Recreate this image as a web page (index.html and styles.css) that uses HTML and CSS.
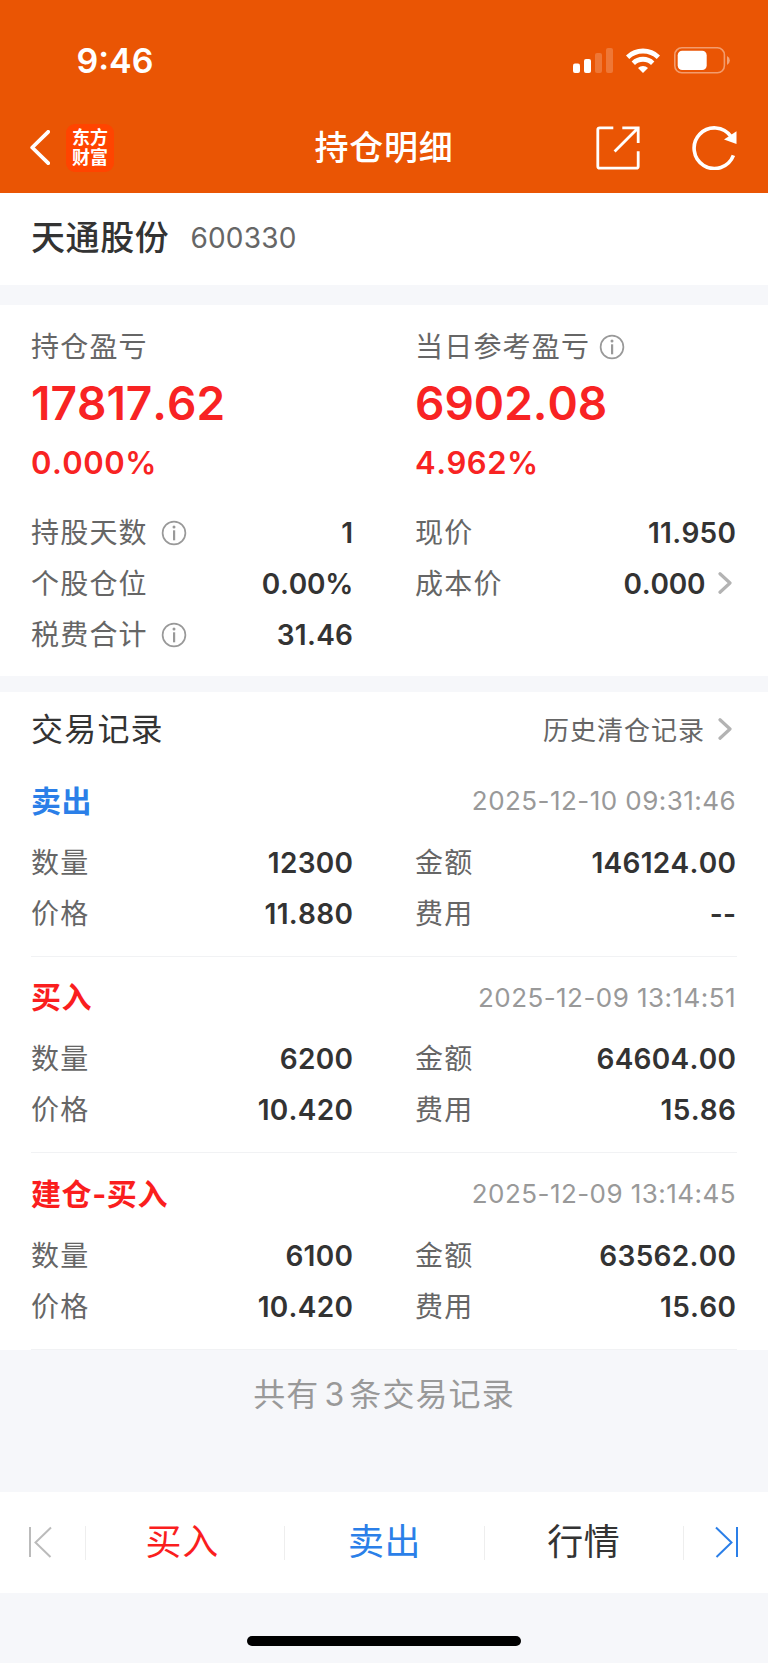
FILE: index.html
```
<!DOCTYPE html>
<html lang="zh-CN">
<head>
    <meta charset="UTF-8">
    <title>持仓明细</title>
    <link rel="stylesheet" href="styles.css">
</head>
<body>
<header>
    <div class="status">
        <span class="time">9:46</span>
        <div class="statusIcons">
            <svg class="signal" width="40" height="26" viewBox="0 0 40 26" fill="#fff">
                <rect x="0" y="15.5" width="7" height="9.5" rx="2"/>
                <rect x="11" y="11" width="7" height="14" rx="2"/>
                <rect x="22" y="5" width="7" height="20" rx="2" opacity=".2"/>
                <rect x="33" y="0" width="7" height="25" rx="2" opacity=".2"/>
            </svg>
            <svg class="wifi" width="34" height="25" viewBox="0 0 34 25" fill="none" stroke="#fff" stroke-width="4.8">
                <path d="M1.6 9.2 A22.2 22.2 0 0 1 32.4 9.2"/>
                <path d="M7.3 15.2 A13.9 13.9 0 0 1 26.7 15.2"/>
                <path d="M17 25 L12 20 A7.2 7.2 0 0 1 22 20 Z" fill="#fff" stroke="none"/>
            </svg>
            <svg class="battery" width="56" height="27" viewBox="0 0 56 27">
                <rect x=".8" y=".8" width="49.6" height="25" rx="7" fill="none" stroke="#fff" stroke-width="1.6" opacity=".42"/>
                <rect x="3.7" y="3.7" width="29" height="19.3" rx="4.5" fill="#fff"/>
                <path d="M53 9 A5 5 0 0 1 53 18 Z" fill="#fff" opacity=".45"/>
            </svg>
        </div>
    </div>
    <nav>
        <div class="navLeft">
            <svg width="20" height="35" viewBox="0 0 20 35" fill="none" stroke="#fff" stroke-width="3.8" stroke-linecap="round" stroke-linejoin="round">
                <path d="M18.2 1.8 L2.2 17.5 L18.2 33.2"/>
            </svg>
            <div class="logo">东方<br>财富</div>
        </div>
        <h1>持仓明细</h1>
        <div class="navRight">
            <svg width="44" height="44" viewBox="0 0 44 44" fill="none" stroke="#fff" stroke-width="2.8">
                <path d="M17.3 1.8 H3.8 Q1.8 1.8 1.8 3.8 V40.2 Q1.8 42.2 3.8 42.2 H40.2 Q42.2 42.2 42.2 40.2 V25.2"/>
                <path d="M26.3 1.8 H42.2 V17 M41.8 2.2 L18.6 25.4"/>
            </svg>
            <svg width="45" height="45" viewBox="0 0 45 45" fill="none" stroke="#fff" stroke-width="3.6">
                <path d="M41.4 30.4 A20.3 20.3 0 1 1 39 11.5"/>
                <path d="M44.5 6.2 V19 L32 14.6 Z" fill="#fff" stroke="none"/>
            </svg>
        </div>
    </nav>
</header>

<section class="stock">
    <h2>天通股份</h2>
    <span>600330</span>
</section>

<section class="position">
    <div class="profit">
        <div>
            <p class="label">持仓盈亏</p>
            <p class="money">17817.62</p>
            <p class="rate">0.000%</p>
        </div>
        <div>
            <p class="label">当日参考盈亏
                <svg class="info near" width="26" height="26" viewBox="0 0 26 26"><use href="#info"/></svg>
            </p>
            <p class="money">6902.08</p>
            <p class="rate">4.962%</p>
        </div>
    </div>
    <div class="rows">
        <div class="row"><span class="label">持股天数<svg class="info" width="26" height="26" viewBox="0 0 26 26"><use href="#info"/></svg></span><b>1</b></div>
        <div class="row"><span class="label">现价</span><b>11.950</b></div>
        <div class="row"><span class="label">个股仓位</span><b class="tight">0.00%</b></div>
        <div class="row"><span class="label">成本价</span><b class="tight">0.000<svg class="arrow" width="14" height="22" viewBox="0 0 14 22"><use href="#arrow"/></svg></b></div>
        <div class="row"><span class="label">税费合计<svg class="info" width="26" height="26" viewBox="0 0 26 26"><use href="#info"/></svg></span><b>31.46</b></div>
    </div>
</section>

<section class="records">
    <div class="recordsHead">
        <h3>交易记录</h3>
        <a>历史清仓记录<svg class="arrow" width="14" height="22" viewBox="0 0 14 22"><use href="#arrow"/></svg></a>
    </div>

    <div class="record">
        <div class="recordTop"><strong class="sell">卖出</strong><time>2025-12-10 09:31:46</time></div>
        <div class="rows">
            <div class="row"><span class="label">数量</span><b>12300</b></div>
            <div class="row"><span class="label">金额</span><b>146124.00</b></div>
            <div class="row"><span class="label">价格</span><b>11.880</b></div>
            <div class="row"><span class="label">费用</span><b>--</b></div>
        </div>
    </div>

    <div class="record">
        <div class="recordTop"><strong class="buy">买入</strong><time>2025-12-09 13:14:51</time></div>
        <div class="rows">
            <div class="row"><span class="label">数量</span><b>6200</b></div>
            <div class="row"><span class="label">金额</span><b>64604.00</b></div>
            <div class="row"><span class="label">价格</span><b>10.420</b></div>
            <div class="row"><span class="label">费用</span><b>15.86</b></div>
        </div>
    </div>

    <div class="record">
        <div class="recordTop"><strong class="buy">建仓-买入</strong><time>2025-12-09 13:14:45</time></div>
        <div class="rows">
            <div class="row"><span class="label">数量</span><b>6100</b></div>
            <div class="row"><span class="label">金额</span><b>63562.00</b></div>
            <div class="row"><span class="label">价格</span><b>10.420</b></div>
            <div class="row"><span class="label">费用</span><b>15.60</b></div>
        </div>
    </div>
</section>

<p class="total">共有<span>3</span>条交易记录</p>

<footer>
    <div class="edge first">
        <svg width="24" height="32" viewBox="0 0 24 32" fill="none" stroke="#bbb" stroke-width="2">
            <path d="M2 1 V31"/>
            <path d="M23 1.5 L7.5 16.5 L22.5 31"/>
        </svg>
    </div>
    <div class="tab buy">买入</div>
    <div class="tab sell">卖出</div>
    <div class="tab">行情</div>
    <div class="edge last">
        <svg width="24" height="32" viewBox="0 0 24 32" fill="none" stroke="#2b7fe8" stroke-width="2">
            <path d="M22 1 V31"/>
            <path d="M1 1.5 L16.5 16.5 L1.5 31"/>
        </svg>
    </div>
</footer>
<div class="homeBar"></div>

<!--公用图标-->
<svg class="defs" width="0" height="0">
    <symbol id="info" viewBox="0 0 26 26">
        <circle cx="13" cy="13" r="11.4" fill="none" stroke="#999" stroke-width="1.7"/>
        <circle cx="13" cy="7" r="1.5" fill="#999"/>
        <rect x="12" y="10.3" width="2.2" height="10" fill="#999"/>
    </symbol>
    <symbol id="arrow" viewBox="0 0 14 22">
        <path d="M2 1.8 L12 11 L2 20.2" fill="none" stroke="#b3b3b3" stroke-width="3.2" stroke-linecap="round" stroke-linejoin="round"/>
    </symbol>
</svg>
</body>
</html>
```
FILE: styles.css
```
*{
    margin: 0;
    padding: 0;
    box-sizing: border-box;
}
body{
    width: 768px;
    background: #f6f7fa;
    color: #333;
    font-family: Inter, "Noto Sans CJK SC", sans-serif;
    font-kerning: none;
}
header{
    height: 192.5px;
    background: #ea5504;
    color: #fff;
}
.status{
    display: flex;
    justify-content: space-between;
    height: 102px;
    padding: 41px 38px 0 76.5px;
}
.time{
    font-size: 34px;
    line-height: 40px;
    font-weight: 600;
}
.statusIcons{
    display: flex;
    align-items: flex-start;
    padding-top: 6px;
}
.signal{
    margin-top: 1px;
}
.wifi{
    margin: 1px 14px 0 13px;
}
nav{
    display: grid;
    grid-template-columns: 1fr auto 1fr;
    align-items: center;
    height: 90px;
    padding: 1px 31px 0 30px;
}
.navLeft{
    display: flex;
    align-items: center;
    gap: 16px;
}
.logo{
    width: 48px;
    height: 48px;
    padding-top: 4px;
    border-radius: 9px;
    background: #ff4400;
    font-size: 18px;
    line-height: 20px;
    font-weight: 700;
    text-align: center;
}
h1{
    padding: 1px 0 0 1px;
    font-size: 34px;
    line-height: 50px;
    font-weight: 500;
    letter-spacing: 0.8px;
}
.navRight{
    display: flex;
    justify-content: flex-end;
    align-items: center;
    gap: 52px;
}
.stock{
    display: flex;
    align-items: center;
    height: 92.5px;
    padding: 0 31px 3px 31px;
    background: #fff;
}
.stock h2{
    padding-bottom: 3px;
    font-size: 34px;
    font-weight: 500;
    letter-spacing: 0.6px;
}
.stock span{
    margin-left: 21px;
    padding-top: 1px;
    color: #666;
    font-size: 28px;
    letter-spacing: 0.2px;
}
.position{
    height: 371px;
    margin-top: 20px;
    padding: 22px 32px 0 31px;
    background: #fff;
}
.profit,.rows{
    display: grid;
    grid-template-columns: 322px 321px;
    justify-content: space-between;
}
.label{
    display: flex;
    align-items: center;
    color: #666;
    font-size: 28px;
    line-height: 40px;
    letter-spacing: 1.2px;
}
.info{
    margin-left: 13px;
}
.near{
    margin-left: 9px;
}
.money{
    color: #f82323;
    font-size: 46px;
    line-height: 72px;
    font-weight: 600;
}
.rate{
    color: #f82323;
    font-size: 31px;
    line-height: 48px;
    font-weight: 600;
    letter-spacing: 0.5px;
}
.position .rows{
    margin-top: 20px;
}
.row{
    display: flex;
    justify-content: space-between;
    align-items: center;
    height: 51.3px;
}
.row b{
    margin-right: -0.3px;
    font-size: 28px;
    font-weight: 600;
    letter-spacing: 0.3px;
}
.row .tight{
    letter-spacing: -0.2px;
}
.arrow{
    margin: 0 4px 0 13px;
}
.records{
    margin-top: 16px;
    background: #fff;
}
.recordsHead{
    display: flex;
    justify-content: space-between;
    align-items: center;
    height: 68px;
    padding: 6px 32px 0 31px;
}
h3{
    padding-top: 1px;
    font-size: 32px;
    line-height: 46px;
    font-weight: 400;
    letter-spacing: 1.2px;
}
.recordsHead a{
    padding-bottom: 2px;
    color: #666;
    font-size: 26px;
    letter-spacing: 1px;
}
.record{
    height: 196.5px;
    margin: 0 31px 0 31px;
    padding: 15px 1px 0 0;
    border-bottom: 1px solid #f1f2f4;
}
.recordTop{
    display: flex;
    justify-content: space-between;
    align-items: center;
    height: 51px;
    margin-bottom: 11px;
}
.recordTop strong{
    font-size: 30px;
    line-height: 44px;
    font-weight: 700;
    letter-spacing: 0.6px;
}
.recordTop time{
    color: #999;
    font-size: 26px;
    letter-spacing: 0.45px;
}
.buy{
    color: #fa1e1e;
}
.sell{
    color: #2b7fe8;
}
.total{
    height: 142.5px;
    padding-top: 21px;
    color: #999;
    font-size: 32px;
    line-height: 48px;
    letter-spacing: 1.1px;
    text-align: center;
}
.total span{
    margin: 0 4px 0 5px;
}
footer{
    display: flex;
    align-items: center;
    height: 101px;
    background: #fff;
}
.edge{
    flex: 0 0 85px;
    height: 34px;
}
.first{
    padding-left: 28px;
}
.last{
    padding-left: 31px;
}
.tab{
    flex: 1;
    height: 34px;
    border-left: 1px solid #eee;
    font-size: 36px;
    line-height: 33px;
    letter-spacing: 0.6px;
    text-align: center;
}
.tab.buy{
    text-indent: -6px;
}
.last{
    border-left: 1px solid #eee;
}
.homeBar{
    width: 274px;
    height: 10px;
    margin: 43px auto 0;
    border-radius: 5px;
    background: #000;
}
.defs{
    display: block;
}
```
